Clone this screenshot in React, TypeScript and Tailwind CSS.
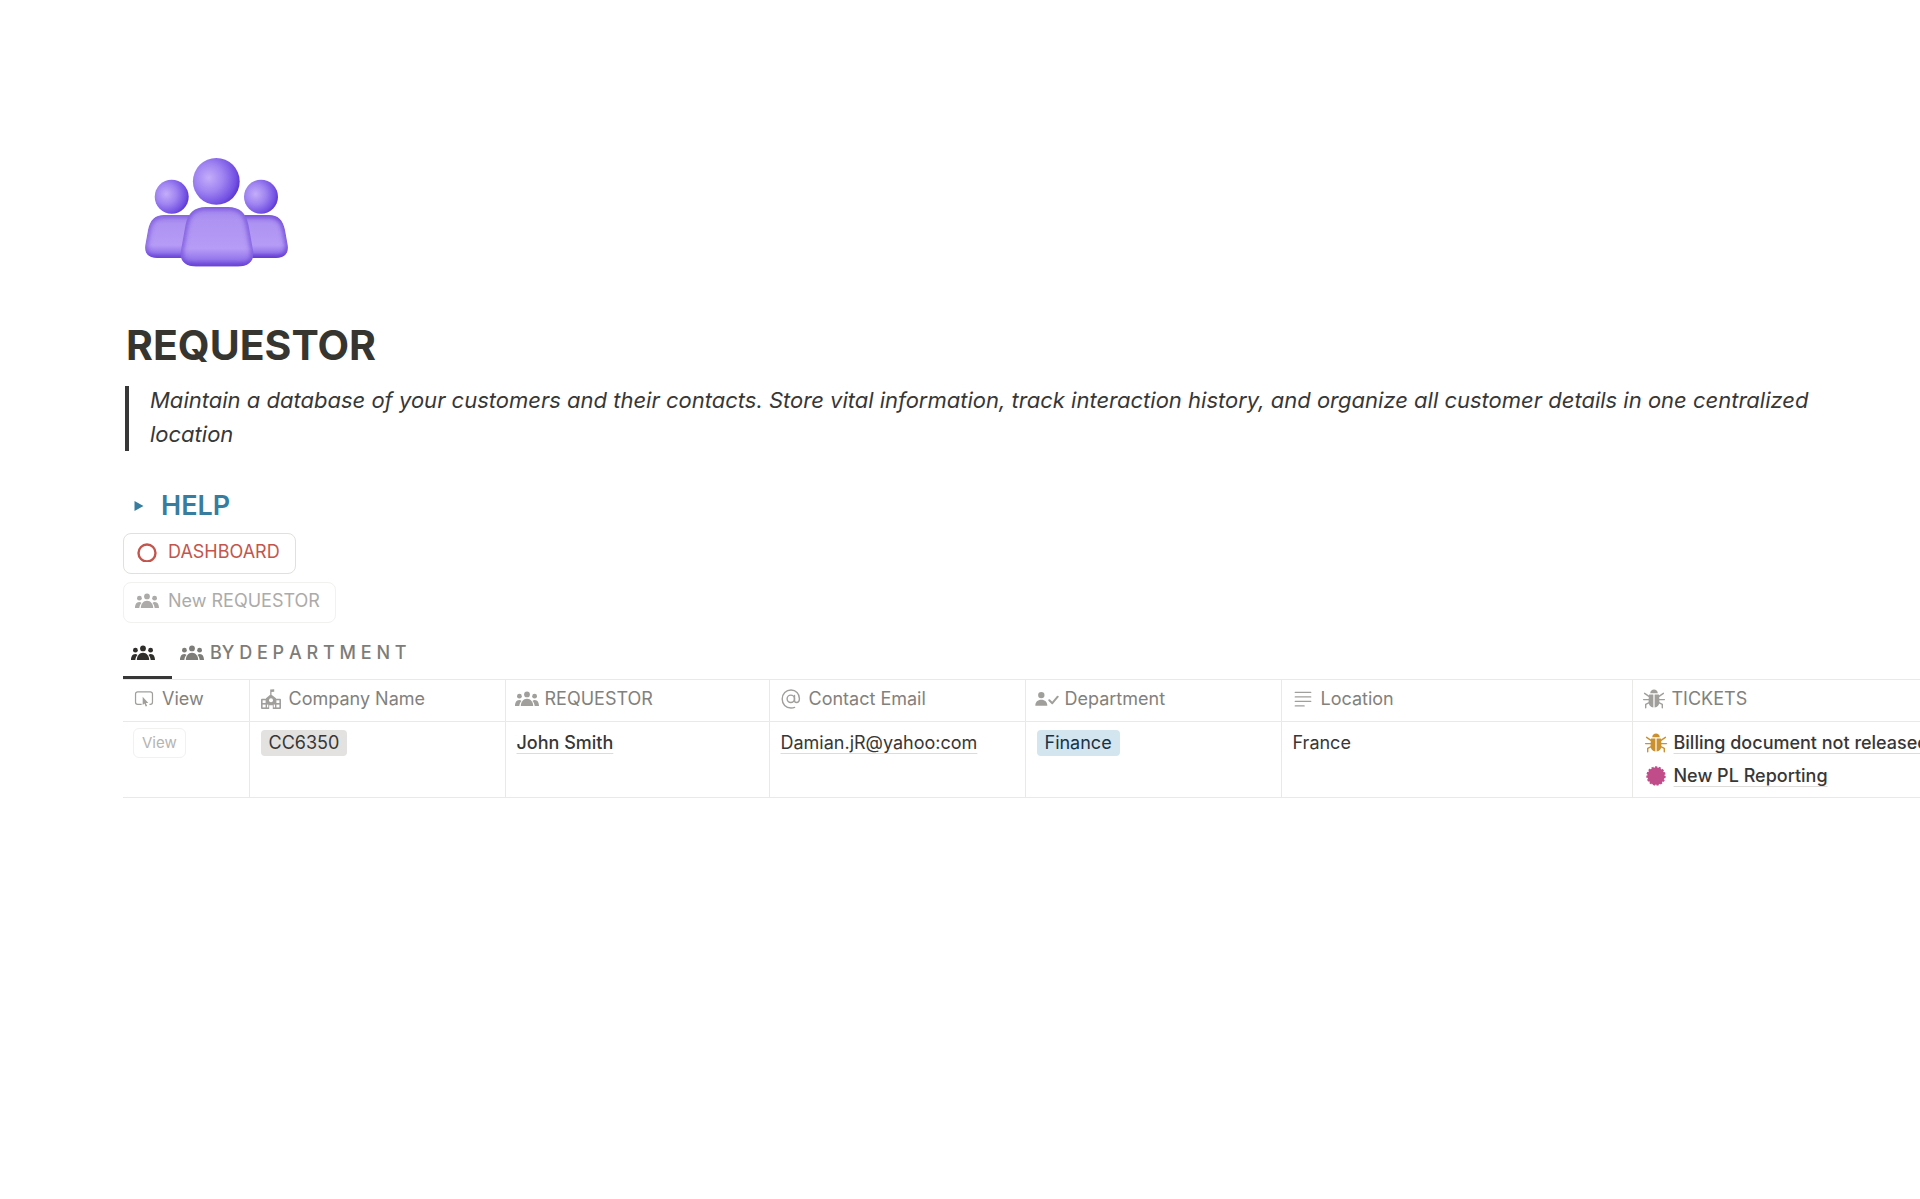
import React from "react";

type IconProps = { className?: string };

const PeopleIcon = ({ className }: IconProps) => (
  <svg viewBox="0 0 24 15" fill="currentColor" className={className} aria-hidden="true">
    <circle cx="12" cy="2.9" r="2.9" />
    <circle cx="4.4" cy="4.7" r="2.4" />
    <circle cx="19.6" cy="4.7" r="2.4" />
    <path d="M5.8 14.5c0-3.6 2.4-7.2 6.2-7.2s6.2 3.6 6.2 7.2z" />
    <path d="M0 14.5c0-3.2 1.3-6 4.2-6 1 0 1.8.4 2.3 1-1.3 1.4-2 3.2-2.2 5z" />
    <path d="M24 14.5c0-3.2-1.3-6-4.2-6-1 0-1.8.4-2.3 1 1.3 1.4 2 3.2 2.2 5z" />
  </svg>
);

const BugIcon = ({ className }: IconProps) => (
  <svg viewBox="0 0 22 20" fill="currentColor" className={className} aria-hidden="true">
    <path d="M7.2 4.2C7.4 2 9 .6 11 .6s3.6 1.4 3.8 3.6z" />
    <path d="M6.1 5.4h4.3v13.2c-3-.3-4.8-2.5-4.8-6.2 0-2.6.1-4.9.5-7z" />
    <path d="M15.9 5.4h-4.3v13.2c3-.3 4.8-2.5 4.8-6.2 0-2.6-.1-4.9-.5-7z" />
    <path
      d="M6 7.3 1.6 4.3M5.8 10.6H.6M6.2 13.6l-3.5 1.7v3.5M16 7.3l4.4-3M16.2 10.6h5.2M15.8 13.6l3.5 1.7v3.5"
      fill="none"
      stroke="currentColor"
      strokeWidth="1.4"
      strokeLinecap="round"
      strokeLinejoin="round"
    />
  </svg>
);

const ButtonIcon = ({ className }: IconProps) => (
  <svg viewBox="0 0 20 17" className={className} aria-hidden="true">
    <path
      d="M7.5 14.2H3.2A2.2 2.2 0 0 1 1 12V3.2A2.2 2.2 0 0 1 3.2 1h13.6A2.2 2.2 0 0 1 19 3.2V12a2.2 2.2 0 0 1-2.2 2.2h-1"
      fill="none"
      stroke="currentColor"
      strokeWidth="1.3"
    />
    <path d="M8.6 6.2v8.6l1.9-1.6 1.3 3.3 1.5-.6-1.3-3.2h2.6z" fill="currentColor" />
  </svg>
);

const SchoolIcon = ({ className }: IconProps) => (
  <svg viewBox="0 0 20 20" fill="currentColor" className={className} aria-hidden="true">
    <path d="M9.2.6 13.2.2v2.6l-2.700.3v2.700l4.500 3.400v.6h4a1 1 0 0 1 1 1V19a1 1 0 0 1-1 1h-7.200v-3.800H8.200V20H1a1 1 0 0 1-1-1v-8.200a1 1 0 0 1 1-1h4v-.6l4.200-3.400z" />
    <g fill="#fff">
      <rect x="1.6" y="11.3" width="3" height="2.700" />
      <rect x="1.6" y="15.600" width="3" height="2.800" />
      <rect x="15.400" y="11.300" width="3" height="2.700" />
      <rect x="15.400" y="15.600" width="3" height="2.800" />
      <rect x="6" y="15.600" width="1.300" height="2.800" />
      <rect x="12.700" y="15.600" width="1.300" height="2.800" />
      <circle cx="10" cy="11.200" r="2" />
    </g>
  </svg>
);

const AtIcon = ({ className }: IconProps) => (
  <svg viewBox="0 0 20 20" fill="none" stroke="currentColor" strokeWidth="1.4" strokeLinecap="round" className={className} aria-hidden="true">
    <circle cx="9.8" cy="9.8" r="3.7" />
    <path d="M13.5 6.4v4.8c0 1.4.7 2.3 2 2.3 1.7 0 2.9-1.7 2.9-4C18.4 4.6 14.9 1 10 1S1.2 4.8 1.2 10 4.8 19 10 19c1.4 0 2.6-.2 3.6-.6" />
  </svg>
);

const PersonCheckIcon = ({ className }: IconProps) => (
  <svg viewBox="0 0 24 15" className={className} aria-hidden="true">
    <circle cx="6.3" cy="3.6" r="3.2" fill="currentColor" />
    <path d="M.3 14.2c0-3.8 2.3-6 6-6s6 2.2 6 6z" fill="currentColor" />
    <path d="m14.3 8.8 3 2.9 5.4-6.5" fill="none" stroke="currentColor" strokeWidth="2" strokeLinecap="round" strokeLinejoin="round" />
  </svg>
);

const TextIcon = ({ className }: IconProps) => (
  <svg viewBox="0 0 18 17" stroke="currentColor" strokeWidth="1.4" strokeLinecap="round" className={className} aria-hidden="true">
    <path d="M.8 1.5h16.4M.8 6.3h16.4M.8 11.1h16.4M.8 15.9h9.4" />
  </svg>
);

const SealIcon = ({ className }: IconProps) => (
  <svg viewBox="-10 -10 20 20" className={className} aria-hidden="true">
    <circle r="8.7" fill="currentColor" />
    <circle r="8.8" fill="none" stroke="currentColor" strokeWidth="1.8" pathLength="60" strokeDasharray="2.4 1.6" />
  </svg>
);

const HeroIcon = () => (
  <svg viewBox="0 0 148 112" className="ml-5 h-28 w-37" role="img" aria-label="People">
    <defs>
      <radialGradient id="head" cx="0.34" cy="0.42" r="0.68">
        <stop offset="0" stopColor="#c4adf9" />
        <stop offset="0.45" stopColor="#9f84f1" />
        <stop offset="0.85" stopColor="#7350e3" />
        <stop offset="1" stopColor="#5936cd" />
      </radialGradient>
      <linearGradient id="body" x1="0" y1="0" x2="0" y2="1">
        <stop offset="0" stopColor="#a286ee" />
        <stop offset="0.22" stopColor="#ae93f2" />
        <stop offset="0.7" stopColor="#b69cf6" />
        <stop offset="0.88" stopColor="#9577ec" />
        <stop offset="1" stopColor="#6c48d8" />
      </linearGradient>
      <filter id="soft" x="-20%" y="-20%" width="140%" height="140%">
        <feGaussianBlur stdDeviation="2.6" />
      </filter>
      <path id="leftBody" d="M21 57h26c8 0 11 4 12 10l4 22c1 7-3 11-9 11H14C6 100 1 96 2.3 87L5 72c2-10 7-15 16-15z" />
      <path id="rightBody" d="M126 57h-26c-8 0-11 4-12 10l-4 22c-1 7 3 11 9 11h40c8 0 13-4 11.700-13L142 72c-2-10-7-15-16-15z" />
      <path id="middleBody" d="M63 49h22c12 0 18 6 20.500 18l4.500 25c2 11-4 16.500-15 16.500H53c-11 0-17-5.500-15-16.500l4.500-25C45 55 51 49 63 49z" />
      <clipPath id="left">
        <use href="#leftBody" />
      </clipPath>
      <clipPath id="right">
        <use href="#rightBody" />
      </clipPath>
      <clipPath id="middle">
        <use href="#middleBody" />
      </clipPath>
    </defs>
    <circle cx="28.7" cy="38.7" r="17" fill="url(#head)" />
    <circle cx="118" cy="38.7" r="17" fill="url(#head)" />
    <g clipPath="url(#left)">
      <use href="#leftBody" fill="url(#body)" />
      <use href="#leftBody" fill="none" stroke="#6841d5" strokeOpacity="0.8" strokeWidth="4" filter="url(#soft)" />
    </g>
    <g clipPath="url(#right)">
      <use href="#rightBody" fill="url(#body)" />
      <use href="#rightBody" fill="none" stroke="#5f36d0" strokeWidth="4" filter="url(#soft)" />
    </g>
    <circle cx="73.3" cy="23.4" r="23.4" fill="url(#head)" />
    <g clipPath="url(#middle)">
      <use href="#middleBody" fill="url(#body)" />
      <use href="#middleBody" fill="none" stroke="#6238d3" strokeOpacity="0.85" strokeWidth="4" filter="url(#soft)" />
    </g>
  </svg>
);

const columns = [
  { label: "View", icon: ButtonIcon, size: "h-4 w-5", width: "w-[126px]" },
  { label: "Company Name", icon: SchoolIcon, size: "h-5 w-5", width: "w-[256px]" },
  { label: "REQUESTOR", icon: PeopleIcon, size: "h-4 w-6", width: "w-[264px]" },
  { label: "Contact Email", icon: AtIcon, size: "h-5 w-5", width: "w-[256px]" },
  { label: "Department", icon: PersonCheckIcon, size: "h-4 w-6", width: "w-[256px]" },
  { label: "Location", icon: TextIcon, size: "h-4 w-5", width: "w-[351px]" },
  { label: "TICKETS", icon: BugIcon, size: "h-5 w-6", width: "w-[350px]" },
];

const tickets = [
  { title: "Billing document not released", icon: BugIcon, color: "text-[#cb912f]" },
  { title: "New PL Reporting", icon: SealIcon, color: "text-[#c14c8a]" },
];

const cell = "border-l border-[#e9e9e7] px-[11px] py-2 first:border-l-0 first:pl-[10px]";

export default function App() {
  return (
    <main className="min-h-screen overflow-hidden bg-white pt-[158px] pl-[123px] font-['Inter',sans-serif] text-lg text-[#373737]">
      <header className="pr-[100px]">
        <HeroIcon />
        <h1 className="mt-[50px] pl-[3px] text-[41px] leading-[50px] font-bold text-[#37352f]">REQUESTOR</h1>
        <blockquote className="mt-4 ml-[2px] flex border-l-4 border-[#373737] pl-[21px] text-[22px] leading-[34px] italic">
          <p className="-mt-[3px]">
            Maintain a database of your customers and their contacts. Store vital information, track interaction
            history, and organize all customer details in one centralized location
          </p>
        </blockquote>
      </header>

      {/* Toggle and buttons */}
      <section className="mt-[36px] flex flex-col items-start gap-2">
        <button className="flex items-center gap-[17px] pb-px pl-[11px] text-[27px] leading-[37px] font-semibold text-[#377d9f]">
          <svg viewBox="0 0 10 10" className="h-[10px] w-[10px]" fill="currentColor" aria-hidden="true">
            <path d="M.5 0 9.5 5 .5 10z" />
          </svg>
          HELP
        </button>
        <button className="flex h-[41px] items-center gap-[9px] rounded-lg border border-[#e0e0de] pr-[15px] pb-[3px] pl-[11px] text-[#c4554d]">
          <svg viewBox="0 0 24 20" className="h-5 w-6" fill="none" stroke="currentColor" strokeWidth="2.4" aria-hidden="true">
            <circle cx="12" cy="11" r="8.5" />
          </svg>
          DASHBOARD
        </button>
        <button className="flex h-[41px] items-center gap-[9px] rounded-lg border border-[#f1f1f0] pr-[15px] pb-[3px] pl-[11px] text-[#acaba9]">
          <PeopleIcon className="h-4 w-6" />
          New REQUESTOR
        </button>
      </section>

      {/* View tabs */}
      <nav className="mt-2 flex border-b border-[#e9e9e7]">
        <a href="#all" aria-label="All requestors" className="flex h-12 items-center border-b-[3px] border-[#373737] pr-[17px] pb-px pl-2 text-[#2f2e2a]">
          <PeopleIcon className="h-4 w-6" />
        </a>
        <a href="#department" className="flex h-12 items-center gap-[6px] px-2 pb-1 font-medium text-[#7d7c78]">
          <PeopleIcon className="h-4 w-6" />
          BY D E P A R T M E N T
        </a>
      </nav>

      <table className="w-max table-fixed border-collapse text-left">
        <thead>
          <tr className="border-b border-[#e9e9e7]">
            {columns.map((column) => {
              const Icon = column.icon;
              return (
                <th key={column.label} className={`${column.width} h-[41px] border-l border-[#e9e9e7] p-0 pb-[2px] pl-[9px] font-normal text-[#82817d] first:border-l-0`}>
                  <div className="flex items-center gap-[6px]">
                    <span className="flex w-6 justify-center text-[#a09f9c]">
                      <Icon className={column.size} />
                    </span>
                    {column.label}
                  </div>
                </th>
              );
            })}
          </tr>
        </thead>
        <tbody>
          <tr className="h-[75px] border-b border-[#e9e9e7] align-top leading-[26px]">
            <td className={cell}>
              <button className="-mt-[2px] block h-[30px] rounded-md border border-[#f1f1f0] px-2 text-[15px] text-[#b5b4b1]">View</button>
            </td>
            <td className={cell}>
              <span className="inline-block rounded-sm bg-[#e3e2e0] px-2">CC6350</span>
            </td>
            <td className={cell}>
              <a href="#john-smith" className="font-medium underline decoration-[#dddcda] underline-offset-4">John Smith</a>
            </td>
            <td className={cell}>
              <a href="#email" className="underline decoration-[#dddcda] underline-offset-4">Damian.jR@yahoo:com</a>
            </td>
            <td className={cell}>
              <span className="inline-block rounded-sm bg-[#d3e5ef] px-2 text-[#183347]">Finance</span>
            </td>
            <td className={cell}>France</td>
            <td className={cell}>
              <ul className="flex flex-col gap-[7px]">
                {tickets.map((ticket) => {
                  const Icon = ticket.icon;
                  return (
                    <li key={ticket.title} className="flex items-center gap-[6px] whitespace-nowrap">
                      <Icon className={`h-5 w-6 ${ticket.color}`} />
                      <a href="#ticket" className="font-medium underline decoration-[#dddcda] underline-offset-4">{ticket.title}</a>
                    </li>
                  );
                })}
              </ul>
            </td>
          </tr>
        </tbody>
      </table>
    </main>
  );
}
